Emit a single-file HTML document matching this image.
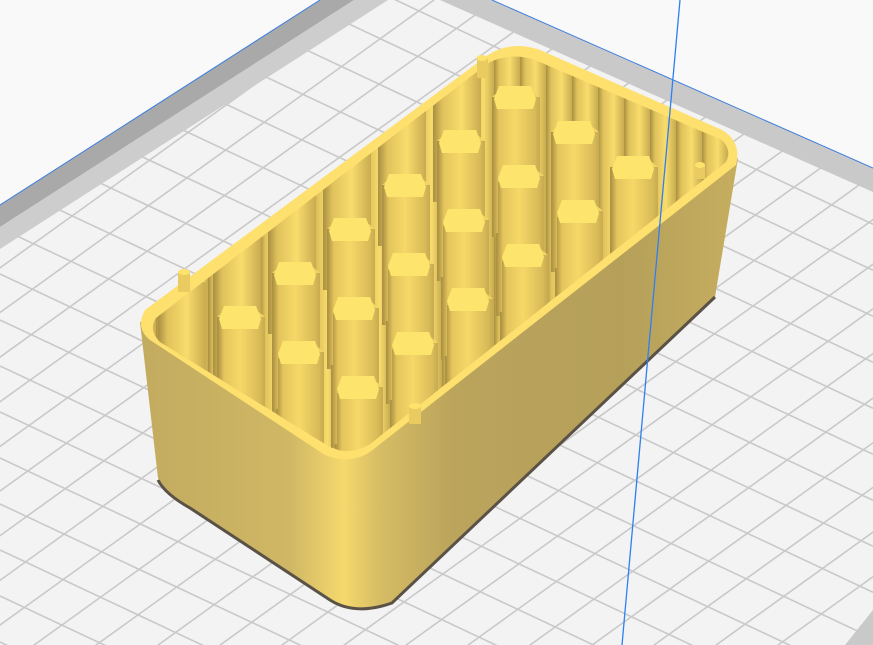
<!DOCTYPE html>
<html><head><meta charset="utf-8"><style>html,body{margin:0;padding:0;background:#f9f9f9;overflow:hidden;width:873px;height:645px}svg{display:block}</style></head>
<body>
<svg width="873" height="645" viewBox="0 0 873 645" xmlns="http://www.w3.org/2000/svg">
<defs>
<clipPath id="plate"><polygon points="0,205 320,0 492,0 873,168 873,645 0,645"/></clipPath>
<linearGradient id="side" gradientUnits="userSpaceOnUse" x1="140" y1="0" x2="740" y2="0">
<stop offset="0" stop-color="#c2ab60"/>
<stop offset="0.25" stop-color="#d0b765"/>
<stop offset="0.34" stop-color="#f5d86d"/>
<stop offset="0.40" stop-color="#d6bc64"/>
<stop offset="0.52" stop-color="#bba45c"/>
<stop offset="0.8" stop-color="#b5a05a"/>
<stop offset="1" stop-color="#c6ae5f"/>
</linearGradient>
<linearGradient id="col" x1="0" x2="1" y1="0" y2="0">
<stop offset="0" stop-color="#b89c48"/>
<stop offset="0.12" stop-color="#e4c55d"/>
<stop offset="0.5" stop-color="#f6d868"/>
<stop offset="1" stop-color="#d6b957"/>
</linearGradient>
<linearGradient id="well" x1="0" x2="1" y1="0" y2="0">
<stop offset="0" stop-color="#a98f42"/>
<stop offset="0.2" stop-color="#e0c25c"/>
<stop offset="0.6" stop-color="#f8dc6c"/>
<stop offset="1" stop-color="#c8ab50"/>
</linearGradient>
<pattern id="stripes" width="26" height="10" patternUnits="userSpaceOnUse">
<rect width="26" height="10" fill="url(#well)"/>
</pattern>
<clipPath id="inner"><path d="M156,318 L490,62 Q512,52 535,60 L722,140 Q732,150 726,162 L370,444 Q350,456 330,447 L160,342 Q148,330 156,318 Z"/></clipPath>
</defs>

<g clip-path="url(#plate)">
<rect width="873" height="645" fill="#f3f3f3"/>
<g stroke="#c9c9c9" stroke-width="1.6" id="grid"></g>
<polygon points="0,205 320,0 354,0 0,227" fill="#a9a9a9"/>
<polygon points="0,227 354,0 388,0 0,249" fill="#cdcdcd"/>
<polygon points="492,0 873,168 873,192 440,0" fill="#c9c9c9"/>
<polygon points="845,645 873,610 873,645" fill="#c9c9c9"/>
</g>
<line x1="0" y1="205" x2="320" y2="0" stroke="#3d7fe0" stroke-width="1"/>
<line x1="492" y1="0" x2="873" y2="168" stroke="#3d7fe0" stroke-width="1"/>

<path d="M140,322 L158,478 Q165,494 190,508 L330,600 Q355,616 392,603 L715,297 L738,158 Z" fill="url(#side)"/>
<path d="M158,480 Q165,494 190,508 L330,600 Q355,616 392,603 L715,297" fill="none" stroke="#5a5246" stroke-width="3"/>
<path d="M145,310 L488,55 Q512,40 540,50 L722,130 Q742,142 736,165 L370,452 Q350,465 325,455 L150,340 Q135,328 145,310 Z" fill="#fde06e"/>
<path d="M156,318 L490,62 Q512,52 535,60 L722,140 Q732,150 726,162 L370,444 Q350,456 330,447 L160,342 Q148,330 156,318 Z" fill="url(#stripes)"/>

<g clip-path="url(#inner)" id="cols"></g>

<g>
<rect x="178" y="272" width="12" height="20" fill="#e9cb62"/><ellipse cx="184" cy="272" rx="6" ry="3" fill="#fde36c"/>
<rect x="477" y="58" width="11" height="20" fill="#e9cb62"/><ellipse cx="482" cy="58" rx="5.5" ry="3" fill="#fde36c"/>
<rect x="409" y="406" width="12" height="18" fill="#e9cb62"/><ellipse cx="415" cy="406" rx="6" ry="3" fill="#fde36c"/>
<rect x="695" y="165" width="10" height="14" fill="#e9cb62"/><ellipse cx="700" cy="165" rx="5" ry="3" fill="#fde36c"/>
</g>

<line x1="680" y1="0" x2="622" y2="645" stroke="#2f7ff0" stroke-width="1.3"/>

<script>
(function(){
var ns="http://www.w3.org/2000/svg";
var g=document.getElementById("grid");
function L(x1,y1,x2,y2){var l=document.createElementNS(ns,"line");l.setAttribute("x1",x1);l.setAttribute("y1",y1);l.setAttribute("x2",x2);l.setAttribute("y2",y2);g.appendChild(l);}
for(var c=-600;c<900;c+=46){L(0,c,873,c+0.47*873);}
for(var c=0;c<1700;c+=62){L(c,0,c-900,648);}
var cg=document.getElementById("cols");
function el(t,at){var e=document.createElementNS(ns,t);for(var k in at)e.setAttribute(k,at[k]);cg.appendChild(e);return e;}
var wells=[];
for(var a=0;a<6;a++)for(var b=0;b<4;b++){wells.push([212+55*a+59*b-30,300-44*a+35*b-18]);}
wells.sort(function(p,q){return p[1]-q[1];});
wells.forEach(function(p){
 el("rect",{x:p[0]-24,y:p[1],width:48,height:140,fill:"url(#well)"});
 el("path",{d:"M"+(p[0]-24)+","+p[1]+" Q"+p[0]+","+(p[1]-22)+" "+(p[0]+24)+","+p[1]+" Z",fill:"#f2d466"});
});
var items=[];
for(var a=0;a<6;a++)for(var b=0;b<3;b++){items.push([240+55*a+59*b,317-44*a+35*b]);}
items.sort(function(p,q){return p[1]-q[1];});
items.forEach(function(p){
 var x=p[0],y=p[1];
 el("rect",{x:x-21,y:y+6,width:42,height:130,fill:"url(#col)"});
 el("polygon",{points:[x-21,y+2,x-16,y-11,x+16,y-11,x+21,y+2,x+18,y+12,x-18,y+12].join(" "),fill:"#fde46c"});
});
})();
</script>
</svg>
</body></html>
